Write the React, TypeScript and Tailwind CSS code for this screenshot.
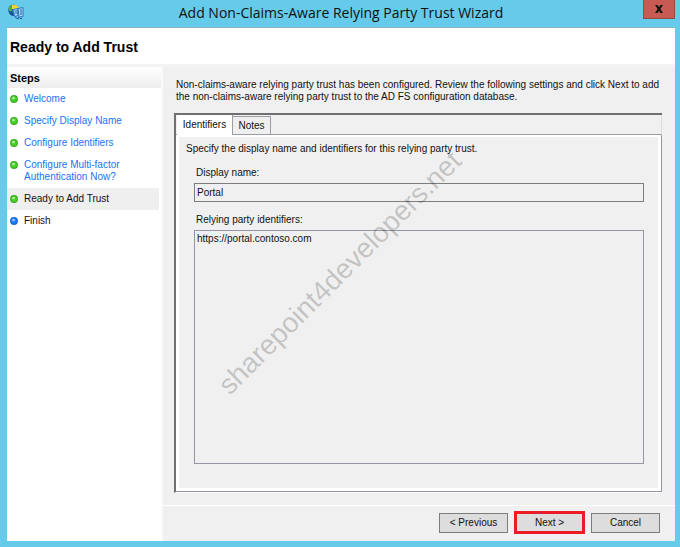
import clsx from 'clsx';

type StepProps = {
	label: string;
	status: 'done' | 'current' | 'pending';
};

const steps: StepProps[] = [
	{ label: 'Welcome', status: 'done' },
	{ label: 'Specify Display Name', status: 'done' },
	{ label: 'Configure Identifiers', status: 'done' },
	{ label: 'Configure Multi-factor Authentication Now?', status: 'done' },
	{ label: 'Ready to Add Trust', status: 'current' },
	{ label: 'Finish', status: 'pending' },
];

function AppIcon() {
	return (
		<svg width="16" height="16" viewBox="0 0 16 16" aria-hidden="true">
			<circle cx="5.5" cy="6" r="5.4" fill="#1f6fb5" />
			<path d="M.5 5C1 2 3 .6 5 1L4 4 4 7 2 8Z" fill="#4fae3a" />
			<path d="M4 1c4-1 6 1 7 3L7 5 4 5Z" fill="#f5d437" />
			<path d="M1 7l3 1 2 4C3 12 1 10 1 7Z" fill="#174f94" />
			<path d="M5.5 5.5l4-1 .5 7-3.500 1Z" fill="#b5dcf7" stroke="#2f79c0" />
			<path d="M10 4.500l5-1v9l-4 .5Z" fill="#a5d4f5" stroke="#2f79c0" />
			<path d="M7 7h2M7 9h3M12 6h2M12 8h2M12 10h2" stroke="#2867ae" />
			<path d="M7 13l3 2 1-2M12 14.500h2" stroke="#20509a" fill="none" />
		</svg>
	);
}

function StepDot({ done }: { done: boolean }) {
	return (
		<svg
			className="mt-0.5 shrink-0"
			width="8"
			height="8"
			viewBox="0 0 8 8"
			aria-hidden="true"
		>
			<circle cx="4" cy="4" r="3.900" fill={done ? '#35ad1c' : '#1764d8'} />
			<circle cx="4" cy="4" r="2.800" fill={done ? '#4bcf2c' : '#1d7bff'} />
			<circle cx="3.500" cy="3" r="1.300" fill={done ? '#b4f0a2' : '#9cc9ff'} />
		</svg>
	);
}

function Step({ label, status }: StepProps) {
	return (
		<li
			className={clsx(
				'mr-0.5 flex items-start gap-1.5 py-[5px] pl-[3px] pr-6',
				status === 'current' && 'bg-[#efefef]'
			)}
		>
			<StepDot done={status !== 'pending'} />
			{status === 'done' ? (
				<a href="#" className="text-[#1a72f5]">
					{label}
				</a>
			) : (
				<span>{label}</span>
			)}
		</li>
	);
}

function WizardButton({
	label,
	highlighted,
}: {
	label: string;
	highlighted?: boolean;
}) {
	return (
		<button
			type="button"
			className={clsx(
				'bg-[#dddddd] text-center',
				highlighted
					? 'h-[23px] w-[71px] border-3 border-[#ed1c24]'
					: 'h-5 w-[69px] border border-[#7d7d7d]'
			)}
		>
			{label}
		</button>
	);
}

function TrustTabs() {
	return (
		<div className="flex flex-1 flex-col border-b border-l-2 border-t-2 border-b-white border-l-[#707070] border-t-[#707070] bg-[#f0f0f0]">
			<div
				role="tablist"
				className="flex h-5 items-end border-b border-r border-b-[#9b9ea5] border-r-[#dddddd] pl-px"
			>
				<button
					type="button"
					role="tab"
					aria-selected="true"
					className="-mb-px h-5 w-14 border-r border-[#9b9ea5] bg-white"
				>
					Identifiers
				</button>
				<button
					type="button"
					role="tab"
					aria-selected="false"
					className="h-[18px] w-[38px] border-r border-t border-[#9b9ea5] bg-[#efefef]"
				>
					Notes
				</button>
			</div>
			<div
				role="tabpanel"
				className="flex flex-1 flex-col border-b border-r border-[#9297a1]"
			>
				<div className="flex flex-1 flex-col border-3 border-t-2 border-white pb-6 pl-[15px] pr-[14px] pt-1.5">
					<p className="-ml-2">
						Specify the display name and identifiers for this relying party
						trust.
					</p>
					<label htmlFor="display-name" className="mt-3 pl-0.5">
						Display name:
					</label>
					<input
						id="display-name"
						readOnly
						defaultValue="Portal"
						className="mt-1 h-[19px] w-full border border-[#7d7d7d] bg-transparent px-0.5 outline-none"
					/>
					<label htmlFor="identifiers" className="mt-3 pl-0.5">
						Relying party identifiers:
					</label>
					<textarea
						id="identifiers"
						readOnly
						defaultValue="https://portal.contoso.com"
						className="mt-1 w-full flex-1 resize-none border border-[#9297a1] bg-transparent px-0.5 py-0.5 outline-none"
					/>
				</div>
			</div>
		</div>
	);
}

export default function App() {
	return (
		<div className="relative flex min-h-screen flex-col overflow-hidden bg-[#66caea] pb-1.5 pl-[7px] pr-[5px] font-['Liberation_Sans',Arial,sans-serif] text-[10px] leading-3 text-[#111111]">
			<header className="flex h-[27px] items-start">
				<div className="w-12 pl-px pt-1">
					<AppIcon />
				</div>
				<h1 className="flex-1 pt-1 text-center font-['Open_Sans',sans-serif] text-[14px] leading-[18px]">
					Add Non-Claims-Aware Relying Party Trust Wizard
				</h1>
				<div className="flex w-12 justify-end">
					<button
						type="button"
						aria-label="Close"
						className="flex h-[19px] w-8 items-center justify-center border border-t-0 border-[#944b43] bg-[#c75b52]"
					>
						<svg width="8" height="8" viewBox="0 0 8 8" aria-hidden="true">
							<path
								d="M0 0h2.500L4 2.300 5.500 0H8L5.300 4 8 8H5.500L4 5.700 2.500 8H0L2.700 4Z"
								fill="#111"
							/>
						</svg>
					</button>
				</div>
			</header>

			<main className="flex flex-1 flex-col border-t border-[#86b6c7] bg-[#f0f0f0]">
				<div className="flex h-[39px] items-center border-b-3 border-[#f3f3f3] bg-white pl-[3px] pt-px">
					<h2 className="text-[14px] font-bold leading-4 text-black">
						Ready to Add Trust
					</h2>
				</div>

				<div className="flex flex-1">
					<nav className="flex w-[156px] shrink-0 flex-col border-r-2 border-[#fafafa] bg-white">
						<h3 className="h-[21px] bg-linear-to-b from-white to-[#ededed] pl-[3px] pt-1 text-[11px] font-bold leading-[14px] text-black">
							Steps
						</h3>
						<ul>
							{steps.map((step) => (
								<Step key={step.label} {...step} />
							))}
						</ul>
					</nav>

					<div className="flex min-w-0 flex-1 flex-col">
						<div className="flex flex-1 flex-col pb-3 pl-[11px] pr-[13px] pt-3">
							<p className="-mr-2 mb-2.5 pl-0.5">
								Non-claims-aware relying party trust has been configured. Review
								the following settings and click Next to add the
								non-claims-aware relying party trust to the AD FS configuration
								database.
							</p>
							<TrustTabs />
						</div>
						<footer className="flex h-9 items-center justify-end gap-1.5 border-t border-white pb-0.5 pr-[15px]">
							<WizardButton label="< Previous" />
							<WizardButton label="Next >" highlighted />
							<WizardButton label="Cancel" />
						</footer>
					</div>
				</div>
			</main>

			<div className="pointer-events-none absolute left-[340px] top-[273px] -translate-x-1/2 -translate-y-1/2 -rotate-45 whitespace-nowrap text-[28px] leading-8 text-black/20">
				sharepoint4developers.net
			</div>
		</div>
	);
}
